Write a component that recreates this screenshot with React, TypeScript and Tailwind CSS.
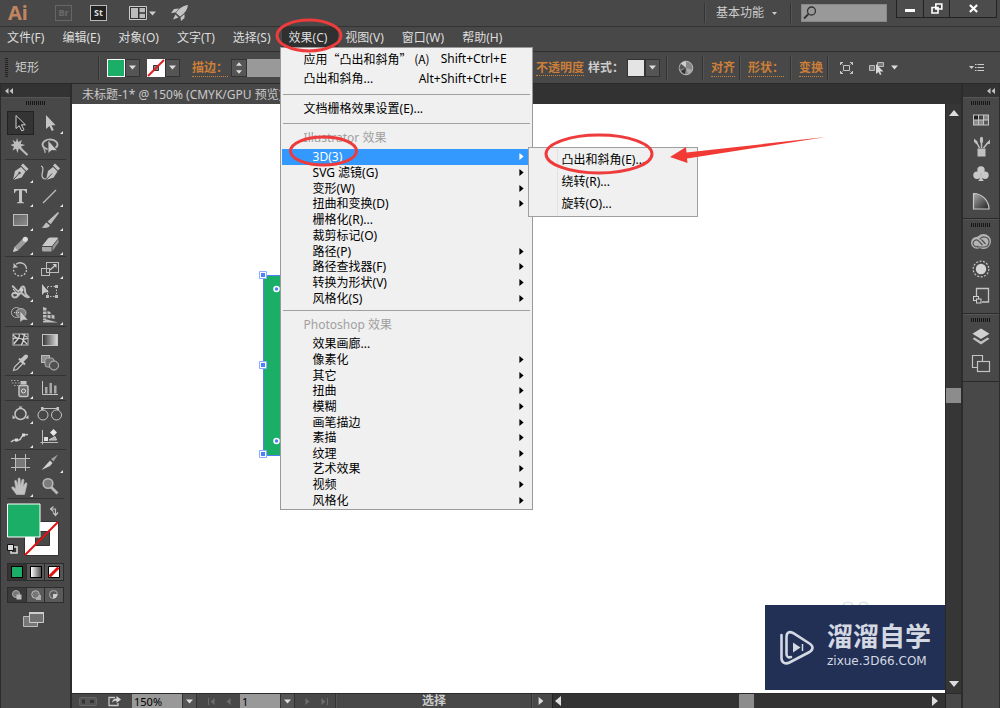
import type { ReactNode } from 'react'
import clsx from 'clsx'

const GREEN = '#1aae66'

/* ---------- data ---------- */

type Effect = { label: string; sub?: boolean; open?: boolean }

const illustratorEffects: Effect[] = [
  { label: '3D(3)', sub: true, open: true },
  { label: 'SVG 滤镜(G)', sub: true },
  { label: '变形(W)', sub: true },
  { label: '扭曲和变换(D)', sub: true },
  { label: '栅格化(R)...' },
  { label: '裁剪标记(O)' },
  { label: '路径(P)', sub: true },
  { label: '路径查找器(F)', sub: true },
  { label: '转换为形状(V)', sub: true },
  { label: '风格化(S)', sub: true },
]

const photoshopEffects: Effect[] = [
  { label: '效果画廊...' },
  { label: '像素化', sub: true },
  { label: '其它', sub: true },
  { label: '扭曲', sub: true },
  { label: '模糊', sub: true },
  { label: '画笔描边', sub: true },
  { label: '素描', sub: true },
  { label: '纹理', sub: true },
  { label: '艺术效果', sub: true },
  { label: '视频', sub: true },
  { label: '风格化', sub: true },
]

const menus = ['文件(F)', '编辑(E)', '对象(O)', '文字(T)', '选择(S)', '效果(C)', '视图(V)', '窗口(W)', '帮助(H)']

/* ---------- tool icons, 24 x 24 grid ---------- */

type Tool = { name: string; icon: ReactNode; more?: boolean; active?: boolean }

const toolGroups: { row: string; tools: Tool[] }[] = [
  {
    row: 'h-6',
    tools: [
      {
        name: '选择工具',
        active: true,
        icon: <path d="M8 4.5v13l3.2-2.8 2.6 5.2 2.2-1.1-2.6-5h4z" fill="#2a2a2a" stroke="#d0d0d0" />,
      },
      {
        name: '直接选择工具',
        more: true,
        icon: <path d="M8 4v14l3.4-3 2.4 5 2-1-2.3-4.8h4.1z" fill="#c4c4c4" />,
      },
      {
        name: '魔棒工具',
        icon: (
          <>
            <path d="M9 3l1.3 4L14 5l-1.4 3.7L17 10l-4 1.6L15 15l-4.2-1.4L9.5 18 8 13.7 4.4 15.5 6 11.8 2.5 10 6.2 8.6 4.5 5 8 7z" fill="#bdbdbd" />
            <path d="M12 13l7.5 7" stroke="#bdbdbd" strokeWidth="2" />
          </>
        ),
      },
      {
        name: '套索工具',
        icon: (
          <>
            <ellipse cx="12" cy="9.5" rx="7.5" ry="5" fill="none" stroke="#b8b8b8" strokeWidth="2" />
            <path d="M6 13c-1 2 2 2 1 5" fill="none" stroke="#b8b8b8" strokeWidth="1.2" />
            <path d="M10 5v13.5l3.5-3 6 .2z" fill="#c8c8c8" stroke="#484848" strokeWidth=".8" />
          </>
        ),
      },
    ],
  },
  {
    row: 'h-6',
    tools: [
      {
        name: '钢笔工具',
        more: true,
        icon: (
          <>
            <path d="M5 20l2-9 6-4 4.5 4.5-3.8 6z" fill="#c4c4c4" />
            <path d="M14 4.5l5.5 5.5" stroke="#c4c4c4" strokeWidth="3" />
            <path d="M5 20l6-6.5" stroke="#484848" />
            <circle cx="11.5" cy="13" r="1.2" fill="#484848" />
          </>
        ),
      },
      {
        name: '曲率工具',
        icon: (
          <>
            <path d="M8 20l2-9 5-4 4.5 4.5-3.8 6z" fill="#c4c4c4" />
            <path d="M16 4.5l5 5" stroke="#c4c4c4" strokeWidth="3" />
            <path d="M8 20l6-6.5" stroke="#484848" />
            <path d="M3 6c4 1 1 6 1 9s1 4 4 4" fill="none" stroke="#c4c4c4" strokeWidth="1.2" />
          </>
        ),
      },
      {
        name: '文字工具',
        more: true,
        icon: <path d="M6 5h13v4h-1c-.3-2-1-2.8-4-2.8V17c0 1.200.6 1.300 2 1.400v.8H9v-.8c1.500-.1 2-.2 2-1.400V6.200c-3 0-3.700.8-4 2.800H6z" fill="#c4c4c4" />,
      },
      { name: '直线段工具', more: true, icon: <path d="M5 19L18 6" stroke="#bdbdbd" strokeWidth="1.3" /> },
      {
        name: '矩形工具',
        more: true,
        icon: <rect x="5.5" y="6.5" width="14" height="11" fill="url(#toolFade)" stroke="#bdbdbd" />,
      },
      {
        name: '画笔工具',
        more: true,
        icon: (
          <>
            <path d="M3 19c3 .5 3-3 5.500-4.500l3.500 3C10 20.500 6 20.500 3 19z" fill="#bdbdbd" />
            <path d="M9.500 13.500L20 4l1 1L12.700 16.300z" fill="#bdbdbd" />
          </>
        ),
      },
      {
        name: '铅笔工具',
        more: true,
        icon: (
          <>
            <path d="M5 20l1.500-5L15 6.500l3.500 3.500L10 18.500z" fill="#9c9c9c" />
            <path d="M5 20l1.500-5 3.500 3.500z" fill="#c8c8c8" />
            <circle cx="17.3" cy="7.3" r="2.6" fill="#dcdcdc" />
          </>
        ),
      },
      {
        name: '橡皮擦工具',
        more: true,
        icon: (
          <>
            <path d="M4 14l6-7.500q1-1 2.500-1H19q1.500 0 .8 1.200L14 14z" fill="#cacaca" />
            <path d="M4 15h9.500v4.500H5.500q-1.500 0-1.500-1.500z" fill="#a8a8a8" />
            <path d="M14.500 14.800L20.500 7v3.500l-6 8.500z" fill="#969696" />
          </>
        ),
      },
    ],
  },
  {
    row: 'h-[23px]',
    tools: [
      {
        name: '旋转工具',
        more: true,
        icon: (
          <>
            <path d="M8 7.200A6.500 6.500 0 0 1 18.500 12" fill="none" stroke="#c4c4c4" strokeWidth="1.3" />
            <path d="M18.500 13A6.500 6.500 0 1 1 6 10" fill="none" stroke="#c4c4c4" strokeWidth="1.3" strokeDasharray="2 1.5" />
            <path d="M5.500 6v4.500H10z" fill="#c4c4c4" />
          </>
        ),
      },
      {
        name: '比例缩放工具',
        more: true,
        icon: (
          <>
            <rect x="8.5" y="5.5" width="12" height="10" fill="none" stroke="#bdbdbd" />
            <rect x="3.5" y="11.5" width="8" height="7" fill="none" stroke="#bdbdbd" />
            <path d="M12 13l5-4.500" stroke="#d0d0d0" strokeWidth="1.2" />
            <path d="M14.500 7H18.500v4z" fill="#d0d0d0" />
          </>
        ),
      },
      {
        name: '宽度工具',
        more: true,
        icon: (
          <>
            <path d="M4 6c3 1 3 4 6 5s2-5 5-4.500c3 .5 1 5 3 8l2.500 2.500c-4 1-5-3-7-4s-3 4.500-6.500 4.500-3.500-4.500-1-4.500 3.500 1 6 0" fill="none" stroke="#bdbdbd" strokeWidth="2" />
            <circle cx="13.5" cy="10" r="2" fill="#cfcfcf" />
            <path d="M5 9l5 6" stroke="#e0e0e0" />
          </>
        ),
      },
      {
        name: '自由变换工具',
        icon: (
          <>
            <rect x="9.5" y="6.5" width="9" height="10" fill="none" stroke="#bdbdbd" strokeDasharray="1.5 1.5" />
            <path d="M17 5h3v3h-3zM17 15h3v3h-3zM8 15h3v3H8z" fill="#bdbdbd" />
            <path d="M4 4v11l2.500-2.500 4.500-.3z" fill="#c8c8c8" />
          </>
        ),
      },
      {
        name: '形状生成器工具',
        more: true,
        icon: (
          <>
            <ellipse cx="8.5" cy="9.5" rx="5" ry="5" fill="none" stroke="#b0b0b0" />
            <ellipse cx="13" cy="10" rx="5" ry="4.5" fill="#808080" stroke="#b0b0b0" />
            <path d="M6 9.500h6" stroke="#d0d0d0" strokeDasharray="1 1" />
            <path d="M12 7.500v11.800l3-2.400 5 .2z" fill="#c8c8c8" stroke="#484848" strokeWidth=".5" />
          </>
        ),
      },
      {
        name: '透视网格工具',
        more: true,
        icon: (
          <>
            <path d="M5 4l3.500 1v12H5zM9.500 8l3 1v6.500l-3-.5zM13.500 11.500l3 1v3.500l-3-.7zM5 18v1.500h15L9 16.500z" fill="#bdbdbd" />
            <path d="M5 8h4M5 11.500h8M5 15h4" stroke="#484848" />
          </>
        ),
      },
    ],
  },
  {
    row: 'h-6',
    tools: [
      {
        name: '网格工具',
        icon: (
          <>
            <rect x="5" y="7" width="15" height="11" fill="#3a3a3a" stroke="#bdbdbd" />
            <path d="M5 12c5-4 9 3 15-1M6 17c2-5 7-5 5-10M13 18c4-4 1-7 4-11M5 8l5 4-4 5M14 12l5 5M14 7l5 3" fill="none" stroke="#d4d4d4" strokeWidth="1.2" />
          </>
        ),
      },
      { name: '渐变工具', icon: <rect x="4.5" y="7.5" width="15" height="11" fill="url(#modeFade)" stroke="#c4c4c4" /> },
      {
        name: '吸管工具',
        more: true,
        icon: (
          <>
            <path d="M5.500 19.500l1-3.500 6-6 2.500 2.500-6 6z" fill="none" stroke="#c4c4c4" strokeWidth="1.2" />
            <path d="M11 7.500l6 6" stroke="#c4c4c4" strokeWidth="2" />
            <path d="M14 9.500l4-4" stroke="#c4c4c4" strokeWidth="4" strokeLinecap="round" />
          </>
        ),
      },
      {
        name: '混合工具',
        icon: (
          <>
            <rect x="3.5" y="4.5" width="8" height="7" fill="#909090" stroke="#bdbdbd" />
            <rect x="7" y="7" width="9" height="9" rx="2.5" fill="#6c6c6c" stroke="#b0b0b0" />
            <circle cx="16" cy="14.5" r="4.5" fill="#505050" stroke="#c4c4c4" />
          </>
        ),
      },
    ],
  },
  {
    row: 'h-6',
    tools: [
      {
        name: '符号喷枪工具',
        more: true,
        icon: (
          <>
            <rect x="11" y="9.5" width="9" height="11" rx="1.5" fill="#6a6a6a" stroke="#c4c4c4" strokeWidth="1.5" />
            <path d="M12.500 5h6v3.500h-6z" fill="#c4c4c4" />
            <circle cx="15.500" cy="15" r="2" fill="none" stroke="#e0e0e0" />
            <path d="M3 4.500h9M4 7h8M6 9.500h5" stroke="#a8a8a8" strokeDasharray="1.5 1.5" />
          </>
        ),
      },
      {
        name: '柱形图工具',
        more: true,
        icon: (
          <>
            <path d="M4.500 5v13.500H20" fill="none" stroke="#c4c4c4" />
            <path d="M7 11h2.500v6.500H7zM11.500 7H14v10.500h-2.500zM16 9.500h2.500v8H16z" fill="#a8a8a8" />
          </>
        ),
      },
    ],
  },
  {
    row: 'h-6',
    tools: [
      {
        name: '椭圆工具',
        more: true,
        icon: (
          <>
            <circle cx="12.500" cy="13" r="5.5" fill="none" stroke="#c4c4c4" strokeWidth="1.5" />
            <path d="M10.500 5.500h4L12.500 8zM4.500 14l3.500 3-3.500 1zM20.500 14L17 17l3.500 1z" fill="#c4c4c4" />
          </>
        ),
      },
      {
        name: '连接工具',
        icon: (
          <>
            <circle cx="5" cy="14" r="5" fill="none" stroke="#c4c4c4" />
            <circle cx="18.500" cy="14" r="5" fill="none" stroke="#c4c4c4" />
            <path d="M3 7.500h18" stroke="#c4c4c4" />
            <path d="M3 6h2.500v3H3zM18.500 6H21v3h-2.500z" fill="#c4c4c4" />
          </>
        ),
      },
      {
        name: '平滑工具',
        more: true,
        icon: (
          <>
            <path d="M3 17c2-2 3-2.500 5-2s4 1 5-2 3-3.500 7-3.500" fill="none" stroke="#c4c4c4" strokeWidth="1.5" />
            <path d="M7 13.500h3v3H7zM14 8.500h3v3h-3z" fill="#d8d8d8" />
          </>
        ),
      },
      {
        name: '度量工具',
        icon: (
          <>
            <path d="M4.500 5v14.500M2.500 17.500H20" stroke="#bdbdbd" />
            <path d="M6 12h4v4H6z" fill="#e0e0e0" />
            <path d="M11 15l6-3.500 1.500 3.500z" fill="#a8a8a8" stroke="#d0d0d0" />
            <path d="M15.500 4l3.500 3.500-3.500 3.500L12 7.500z" fill="#e8e8e8" />
          </>
        ),
      },
    ],
  },
  {
    row: 'h-6',
    tools: [
      {
        name: '画板工具',
        icon: (
          <>
            <rect x="7.5" y="8.5" width="10" height="9" fill="#787878" />
            <path d="M7.500 4v17M17.500 4v17M3 8.500h19M3 17.500h19" stroke="#bdbdbd" />
          </>
        ),
      },
      {
        name: '切片工具',
        more: true,
        icon: (
          <>
            <path d="M3.500 20L12 10.500l2.500 2.500L12 16z" fill="#d0d0d0" />
            <path d="M13 9l7-4.500-4.500 7z" fill="#a0a0a0" />
          </>
        ),
      },
      {
        name: '抓手工具',
        more: true,
        icon: (
          <path
            d="M8.500 20.500L4 14.500c-.9-1.300.6-2.200 1.700-1.200L8 15 6.700 7.500c-.2-1.300 1.500-1.700 1.900-.3L10 12l.1-7c0-1.400 1.900-1.400 2 0l.4 7 1.500-6c.4-1.300 2.100-.9 1.900.4L15 12.800l2.200-3.500c.8-1.100 2.200-.2 1.700 1L16.500 20.500z"
            fill="#c0c0c0"
            stroke="#c0c0c0"
            strokeWidth=".6"
          />
        ),
      },
      {
        name: '缩放工具',
        icon: (
          <>
            <path d="M13 13l6.500 6.500" stroke="#b8b8b8" strokeWidth="2.8" />
            <circle cx="10" cy="9.500" r="4.8" fill="#7c7c7c" stroke="#b8b8b8" strokeWidth="1.6" />
          </>
        ),
      },
    ],
  },
]

/* ---------- panel icons on the right ---------- */

const dockGroups: { name: string; icon: ReactNode }[][] = [
  [
    {
      name: '色板',
      icon: (
        <>
          <path d="M4 6.500h16v11H4z" fill="#c4c4c4" />
          <path d="M5 7.500h4v4H5z" fill="#222" />
          <path d="M10 7.500h4v4h-4z" fill="#444" />
          <path d="M15 7.500h4v4h-4z" fill="#888" />
          <path d="M5 12.500h4v4H5zM10 12.500h4v4h-4z" fill="#8a8a8a" />
          <path d="M15 12.500h4v4h-4z" fill="#5a5a5a" />
        </>
      ),
    },
    {
      name: '画笔',
      icon: (
        <>
          <path d="M8.500 13.500h8v8h-8z" fill="#c0c0c0" />
          <path d="M10.500 13L7 6M12.500 13V5M14.500 13l5-6" stroke="#c0c0c0" strokeWidth="1.5" />
          <ellipse cx="12.500" cy="5" rx="1.6" ry="3.2" fill="#c0c0c0" />
          <path d="M5 3.500l3.500 3-.5 3-3-2.500zM16.500 9.500l4.500-5v4.200z" fill="#c0c0c0" />
        </>
      ),
    },
    {
      name: '符号',
      icon: (
        <>
          <circle cx="12" cy="8" r="3.7" fill="#c8c8c8" />
          <circle cx="8" cy="13.200" r="3.7" fill="#c8c8c8" />
          <circle cx="16" cy="13.200" r="3.7" fill="#c8c8c8" />
          <path d="M11.300 11h1.400c0 5 .5 6.500 2.300 8H9c1.800-1.500 2.300-3 2.300-8z" fill="#c8c8c8" />
        </>
      ),
    },
    {
      name: '颜色参考',
      icon: <path d="M4.500 20V4.500C13 4.500 20 11.500 20 20z" fill="url(#guideFade)" stroke="#c8c8c8" strokeWidth="1.2" />,
    },
  ],
  [
    {
      name: 'Libraries',
      icon: (
        <>
          <circle cx="8" cy="12.800" r="6" fill="#b4b4b4" />
          <circle cx="14.500" cy="11.500" r="7.500" fill="#b4b4b4" />
          <path d="M8 17h7a5 5 0 1 0-4.300-7.500" fill="none" stroke="#505050" strokeWidth="1.2" />
          <path d="M13.500 15L10 11.300C7.500 8.500 4 10.500 4 13.200s3 4.600 5.300 2.800" fill="none" stroke="#505050" strokeWidth="1.2" />
          <path d="M12.500 9.500l4 4.500" stroke="#505050" strokeWidth="1.2" />
        </>
      ),
    },
    {
      name: '外观',
      icon: (
        <>
          <circle cx="12" cy="12" r="5.2" fill="#d4d4d4" />
          <circle cx="12" cy="12" r="7.8" fill="none" stroke="#c4c4c4" strokeWidth="1.2" strokeDasharray="2 1.5" />
        </>
      ),
    },
    {
      name: '图形样式',
      icon: (
        <>
          <path d="M7.500 12V4.500h12V18H13" fill="none" stroke="#c4c4c4" strokeWidth="1.3" />
          <rect x="4.5" y="12.5" width="5" height="4" fill="#484848" stroke="#d0d0d0" />
          <rect x="7.5" y="15" width="4.5" height="4" fill="#484848" stroke="#d0d0d0" />
        </>
      ),
    },
  ],
  [
    {
      name: '图层',
      icon: (
        <>
          <path d="M12 3.500l8.500 5.200L12 14 3.500 8.700z" fill="#d0d0d0" />
          <path d="M5.500 12.500l6.500 4 6.500-4 2 1.300L12 19.500l-8.500-5.700z" fill="#c0c0c0" />
        </>
      ),
    },
    {
      name: '画板',
      icon: (
        <>
          <path d="M8 15.500H3.500v-12h10V9" fill="none" stroke="#c4c4c4" strokeWidth="1.2" />
          <rect x="8.5" y="9.5" width="12" height="10" fill="#484848" stroke="#c4c4c4" strokeWidth="1.2" />
        </>
      ),
    },
  ],
]

/* ---------- small parts ---------- */

function Icon({ children }: { children: ReactNode }) {
  return (
    <svg viewBox="0 0 24 24" className="size-6 shrink-0 overflow-visible" aria-hidden="true">
      {children}
    </svg>
  )
}

function Gradients() {
  return (
    <svg className="absolute size-0" aria-hidden="true">
      <defs>
        <linearGradient id="toolFade" x1="0" y1="0" x2="1" y2="1">
          <stop offset="0" stopColor="#666" />
          <stop offset="1" stopColor="#8c8c8c" />
        </linearGradient>
        <linearGradient id="modeFade">
          <stop offset="0" stopColor="#333" />
          <stop offset="1" stopColor="#ddd" />
        </linearGradient>
        <linearGradient id="guideFade" x1="0" y1="0" x2="1" y2="1">
          <stop offset="0" stopColor="#aaa" />
          <stop offset="1" stopColor="#222" />
        </linearGradient>
      </defs>
    </svg>
  )
}

function Caret({ dir = 'down', className }: { dir?: 'down' | 'up' | 'left' | 'right'; className?: string }) {
  const d = { down: 'M0 2h10L5 8z', up: 'M0 8h10L5 2z', left: 'M8 0v10L2 5z', right: 'M2 0v10l6-5z' }[dir]
  return (
    <svg viewBox="0 0 10 10" className={clsx('shrink-0', className)} aria-hidden="true">
      <path d={d} fill="currentColor" />
    </svg>
  )
}

function Divider({ className }: { className?: string }) {
  return <span className={clsx('w-0.5 shrink-0 border-l border-[#333] bg-[#555]', className)} />
}

function Grip() {
  return (
    <svg viewBox="0 0 20 4" className="mx-auto h-1 w-5 shrink-0" aria-hidden="true">
      <path d="M.5 0v4M2.500 0v4M4.500 0v4M6.500 0v4M8.500 0v4M10.500 0v4M12.500 0v4M14.500 0v4M16.500 0v4M18.500 0v4" stroke="#161616" />
    </svg>
  )
}

function Chevrons() {
  return (
    <svg viewBox="0 0 8 6" className="h-1.5 w-2" aria-hidden="true">
      <path d="M3.500 0v6L0 3zM8 0v6L4.500 3z" fill="#c4c4c4" />
    </svg>
  )
}

function DropButton({ label }: { label: string }) {
  return (
    <button aria-label={label} className="flex h-[18px] w-[15px] shrink-0 items-center justify-center border border-[#333] bg-[#555] text-[#ddd]">
      <Caret className="size-[7px]" />
    </button>
  )
}

function ControlLink({ children }: { children: ReactNode }) {
  return (
    <a href="#" className="shrink-0 border-b border-dotted border-[#c8803a] leading-[15px] font-bold text-[#cc7f38]">
      {children}
    </a>
  )
}

/* ---------- effect menu ---------- */

function Submenu() {
  return (
    <ul className="absolute -top-0.5 left-full z-20 -ml-[3px] flex h-[70px] w-[170px] flex-col border border-[#a0a0a0] bg-[#f0f0f0] py-px text-black">
      {['凸出和斜角(E)...', '绕转(R)...', '旋转(O)...'].map(label => (
        <li key={label} className="flex flex-1">
          <button className="ml-7 flex-1 border-l border-[#e2e2e2] pl-1 text-left">{label}</button>
        </li>
      ))}
    </ul>
  )
}

function EffectRow({ label, sub, open }: Effect) {
  return (
    <li className="relative flex min-h-0 flex-1">
      <button
        className={clsx('flex flex-1 items-center justify-between pr-1.5 pl-[31px] leading-[15px]', open && 'bg-[#3399ff] text-white')}
      >
        {label}
        {sub && <Caret dir="right" className="size-[7px]" />}
      </button>
      {open && <Submenu />}
    </li>
  )
}

function MenuLine() {
  return <div className="flex h-2 items-center px-px"><div className="h-px flex-1 bg-[#a0a0a0]" /></div>
}

function EffectMenu() {
  return (
    <div className="absolute top-full -left-0.5 z-10 w-[253px] border border-[#999] bg-[#f0f0f0] px-px py-px whitespace-nowrap text-black">
      <button className="flex h-5 w-full items-center justify-between pr-6 pl-[22px]">
        {/* CJK face first so the quotes come out full width */}
        <span className="font-['Noto_Sans_CJK_SC',sans-serif]">应用“凸出和斜角” (A)</span>
        <span>Shift+Ctrl+E</span>
      </button>
      <button className="mb-px flex h-5 w-full items-center justify-between pr-6 pl-[22px]">
        <span>凸出和斜角...</span>
        <span>Alt+Shift+Ctrl+E</span>
      </button>
      <MenuLine />
      <button className="mt-px flex h-5 w-full items-center pl-[22px]">文档栅格效果设置(E)...</button>
      <MenuLine />
      <div className="h-[22px] pl-[22px] leading-[22px] text-[#a0a0a0]">Illustrator 效果</div>
      <ul className="flex h-[157px] flex-col">
        {illustratorEffects.map(e => <EffectRow key={e.label} {...e} />)}
      </ul>
      <MenuLine />
      <div className="h-[22px] pl-[22px] leading-[22px] text-[#a0a0a0]">Photoshop 效果</div>
      <ul className="flex h-[172px] flex-col">
        {photoshopEffects.map(e => <EffectRow key={e.label} {...e} />)}
      </ul>
    </div>
  )
}

/* ---------- bars ---------- */

function TitleBar() {
  return (
    <header className="flex h-[27px] shrink-0 items-center border-b border-[#333]">
      <span className="w-[55px] pl-2 text-[20px] leading-6 font-bold text-[#c18462]">Ai</span>
      <button className="h-4 w-[17px] border border-[#666] text-[9px] leading-3 font-bold text-[#6c6c6c]">Br</button>
      <button className="ml-[18px] h-4 w-[17px] border border-[#bbb] bg-[#222] text-[9px] leading-3 font-bold text-[#ddd]">St</button>
      <button aria-label="排列文档" className="ml-[22px] flex items-center text-[#ccc]">
        <svg viewBox="0 0 18 14" className="h-3.5 w-[18px]" aria-hidden="true">
          <path d="M.5.5h17v13H.5z" fill="#333" stroke="#ccc" />
          <path d="M2 2h7v10H2zM10.500 2H16v4.300h-5.500zM10.500 7.700H16V12h-5.500z" fill="#bbb" />
        </svg>
        <Caret className="ml-0.5 size-[7px]" />
      </button>
      <button aria-label="GPU 性能" className="ml-[15px]">
        <svg viewBox="0 0 18 18" className="size-[18px]" aria-hidden="true">
          <path d="M17 1C10 2 7 6 5 9l4 3.500C13 10 16 7 17 1zM4.500 8.500L8 4.500 3 5 0 9zM9.500 13.500l4-3.500v4l-3.500 3zM4.500 10.500l-2.500 5 5.500-2z" fill="#c4c4c4" />
        </svg>
      </button>

      <div className="mr-[3px] ml-auto flex h-full items-center">
        <Divider className="h-5" />
        <button className="ml-[10px] flex items-center text-[#ccc]">
          基本功能
          <Caret className="ml-2 size-[5px]" />
        </button>
        <Divider className="ml-[13px] h-5" />
        <label className="ml-[9px] flex h-[18px] w-[86px] items-center border border-[#888] bg-[#999]">
          <svg viewBox="0 0 14 14" className="ml-px size-3.5 shrink-0" aria-hidden="true">
            <circle cx="8.5" cy="5" r="4" fill="none" stroke="#333" strokeWidth="1.3" />
            <path d="M5.500 8L1 12.500" stroke="#333" strokeWidth="1.8" />
          </svg>
          <input type="search" aria-label="搜索帮助" className="w-full min-w-0 bg-transparent outline-none" />
        </label>
        <div className="ml-[9px] flex h-[18px] self-start border border-t-0 border-[#222] bg-[#4c4c4c]">
          <button aria-label="最小化" className="flex w-[27px] items-center justify-center border-r border-[#222] pt-1">
            <span className="h-[3px] w-2.5 bg-white" />
          </button>
          <button aria-label="还原" className="flex w-[26px] items-center justify-center border-r border-[#222]">
            <svg viewBox="0 0 12 11" className="h-[11px] w-3" aria-hidden="true">
              <path d="M4.800 1h6v5h-6zM1 4.500h6V10H1z" fill="#4c4c4c" stroke="#fff" strokeWidth="1.6" />
            </svg>
          </button>
          <button aria-label="关闭" className="flex w-[46px] items-center justify-center">
            <svg viewBox="0 0 10 10" className="size-[9px]" aria-hidden="true">
              <path d="M1 1l8 8M9 1L1 9" stroke="#fff" strokeWidth="2.4" />
            </svg>
          </button>
        </div>
      </div>
    </header>
  )
}

function MenuBar() {
  return (
    <nav className="flex h-[25px] shrink-0 border-b border-[#2e2e2e] text-[#ddd]">
      {menus.map(m => (
        <div key={m} className="relative h-5">
          <button className={clsx('h-full pr-[11px] pl-[7px] leading-[21px]', m === '效果(C)' && 'bg-[#303030]')}>{m}</button>
          {m === '效果(C)' && <EffectMenu />}
        </div>
      ))}
    </nav>
  )
}

function ControlBar() {
  return (
    <div className="flex h-8 shrink-0 items-center border-b border-[#2a2a2a] whitespace-nowrap text-[#ccc]">
      <div className="flex w-[536px] shrink-0 items-center pl-[5px]">
        <svg viewBox="0 0 3 20" className="h-5 w-[3px]" aria-hidden="true">
          <path d="M0 .5h3M0 2.500h3M0 4.500h3M0 6.500h3M0 8.500h3M0 10.500h3M0 12.500h3M0 14.500h3M0 16.500h3M0 18.500h3" stroke="#222" />
        </svg>
        <span className="w-[90px] pl-[7px]">矩形</span>
        <Divider className="mr-[7px] h-6" />
        <button aria-label="填色" className="size-[18px] border border-white bg-[#1aae66]" />
        <DropButton label="填色选项" />
        <button aria-label="描边颜色" className="ml-[7px] size-[18px]">
          <svg viewBox="0 0 18 18" className="size-full" aria-hidden="true">
            <path d="M0 0h18v18H0z" fill="#fff" />
            <path d="M6.500 6.500h5v5h-5z" fill="#888" stroke="#333" />
            <path d="M1 17L17 1" stroke="#e02020" strokeWidth="2" />
          </svg>
        </button>
        <DropButton label="描边颜色选项" />
        <span className="ml-3"><ControlLink>描边：</ControlLink></span>
        <div className="ml-[3px] flex h-[18px] w-4 flex-col items-center justify-around border border-[#333] bg-[#555]">
          <button aria-label="增加" className="text-[#ddd]"><Caret dir="up" className="block size-1.5" /></button>
          <button aria-label="减少" className="text-[#ddd]"><Caret className="block size-1.5" /></button>
        </div>
        <input aria-label="描边粗细" className="h-[18px] w-14 bg-[#999]" />
      </div>
      <ControlLink>不透明度</ControlLink>
      <span className="ml-1 font-bold">样式：</span>
      <button aria-label="样式" className="ml-[3px] size-[18px] border border-[#333] bg-[#e4e4e4]" />
      <DropButton label="样式选项" />
      <Divider className="ml-1.5 h-6" />
      <button aria-label="重新着色图稿" className="ml-[10px]">
        <svg viewBox="0 0 16 16" className="size-4" aria-hidden="true">
          <circle cx="8" cy="8" r="6.8" fill="#888" stroke="#bbb" />
          <path d="M8 8L3 3.500A6.500 6.500 0 0 1 8 1.500z" fill="#ccc" />
          <path d="M8 8l6.300 2A6.500 6.500 0 0 1 10 14z" fill="#aaa" />
          <path d="M8 8L1.700 9.500A6.500 6.500 0 0 1 3 4z" fill="#555" />
          <path d="M8 8l-1 6a6.500 6.500 0 0 1-4-3z" fill="#333" />
        </svg>
      </button>
      <Divider className="ml-2 h-6" />
      <span className="ml-[7px]"><ControlLink>对齐</ControlLink></span>
      <Divider className="ml-1 h-6" />
      <span className="ml-[7px]"><ControlLink>形状：</ControlLink></span>
      <Divider className="ml-1.5 h-6" />
      <span className="ml-[7px]"><ControlLink>变换</ControlLink></span>
      <Divider className="ml-1 h-6" />
      <button aria-label="隔离选中的对象" className="ml-[10px]">
        <svg viewBox="0 0 15 14" className="h-3.5 w-[15px]" aria-hidden="true">
          <path d="M4.500 4.500h6v5h-6z" fill="none" stroke="#c4c4c4" />
          <path d="M1.500 1.500l2 2M13.500 1.500l-2 2M1.500 12.500l2-2M13.500 12.500l-2-2M1.500 4V1.500H4M13.500 4V1.500H11M1.500 10v2.500H4M13.500 10v2.500H11" fill="none" stroke="#c4c4c4" />
        </svg>
      </button>
      <button aria-label="选择类似的对象" className="ml-[15px] flex items-center text-[#ddd]">
        <svg viewBox="0 0 16 14" className="h-3.5 w-4" aria-hidden="true">
          <path d="M.5 4.500h5v5h-5zM8.500 1.500h6v4h-6z" fill="#777" stroke="#bbb" />
          <path d="M7 3v10l2.500-2 1.500 3 1.500-.8L11 10.500h3.500z" fill="#d8d8d8" />
        </svg>
        <Caret className="ml-1.5 size-[7px]" />
      </button>
      <button aria-label="面板菜单" className="mr-4 ml-auto flex items-center gap-px text-[#ccc]">
        <Caret className="size-[5px]" />
        <svg viewBox="0 0 9 9" className="size-[9px]" aria-hidden="true">
          <path d="M0 1.500h1.500M2.500 1.500H9M0 4.500h1.500M2.500 4.500H9M0 7.500h1.500M2.500 7.500H9" stroke="currentColor" />
        </svg>
      </button>
    </div>
  )
}

/* ---------- tool panel ---------- */

function FillStroke() {
  return (
    <svg viewBox="0 0 60 54" className="ml-[6px] h-[54px] w-[60px]" role="img" aria-label="填色和描边">
      <path d="M17.500 18.500h34v34h-34z" fill="#fff" stroke="#333" />
      <path d="M28.500 28.500h14v14h-14z" fill="#484848" stroke="#333" />
      <path d="M18 52L51 19" stroke="#e01010" strokeWidth="2" />
      <path d="M.5 1h32.500v33H.5z" fill={GREEN} stroke="#fff" />
      <path d="M44 6h4.500v5M46.500 3.500L43.500 6l3 2.500M46 9.500l2.500 3 2.500-3" fill="none" stroke="#c0c0c0" strokeWidth="1.2" />
      <path d="M4 44h6v6H4z" fill="#333" stroke="#ddd" strokeWidth="1.5" />
      <path d="M.5 41.500h6v6h-6z" fill="#ddd" stroke="#111" />
    </svg>
  )
}

function ToolPanel() {
  return (
    <aside className="flex w-[72px] shrink-0 flex-col border-r-2 border-l border-[#2c2c2c]">
      <div className="flex h-[13px] shrink-0 items-center bg-[#333] pl-1"><Chevrons /></div>
      <div className="flex h-3.5 shrink-0 items-start border-t border-[#555] pt-[3px]"><Grip /></div>
      {toolGroups.map((group, i) => (
        <div key={i} className={clsx('mx-1 grid grid-cols-[30px_30px]', i > 0 && 'border-t border-[#333]')}>
          {group.tools.map(t => (
            <button
              key={t.name}
              aria-label={t.name}
              className={clsx('relative flex items-center justify-center', group.row)}
            >
              <span className={clsx('flex h-full w-[27px] items-center justify-center', t.active && 'border border-[#222] bg-[#343434]')}>
                <Icon>{t.icon}</Icon>
              </span>
              {t.more && (
                <svg viewBox="0 0 4 4" className="absolute right-0.5 bottom-px size-[3px]" aria-hidden="true">
                  <path d="M4 0v4H0z" fill="#e8e8e8" />
                </svg>
              )}
            </button>
          ))}
        </div>
      ))}
      <div className="mx-1.5 border-t border-[#333]" />
      <div className="mt-1"><FillStroke /></div>
      <div className="mt-1.5 ml-1.5 flex h-[18px] w-[57px] border border-[#2c2c2c] bg-[#555]">
        <button aria-label="颜色" className="flex flex-1 items-center justify-center bg-[#333]">
          <span className="size-3 border border-black bg-[#1aae66]" />
        </button>
        <button aria-label="渐变" className="flex flex-1 items-center justify-center border-x border-[#2c2c2c]">
          <span className="size-3 border border-black bg-linear-to-r from-white to-[#555]" />
        </button>
        <button aria-label="无" className="flex flex-1 items-center justify-center">
          <svg viewBox="0 0 12 12" className="size-3" aria-hidden="true">
            <path d="M.5.5h11v11H.5z" fill="#fff" stroke="#000" />
            <path d="M1.500 10.500l9-9" stroke="#e01010" strokeWidth="3" />
          </svg>
        </button>
      </div>
      <div className="mt-1.5 ml-1.5 flex h-4 w-[57px] border border-[#2c2c2c] bg-[#5a5a5a]">
        <button aria-label="正常绘图" className="flex flex-1 items-center justify-center bg-[#3a3a3a]">
          <svg viewBox="0 0 12 12" className="size-3" aria-hidden="true">
            <circle cx="5" cy="5" r="3.5" fill="#777" stroke="#aaa" />
            <path d="M5.500 5.500h5v5h-5z" fill="#bbb" />
          </svg>
        </button>
        <button aria-label="背面绘图" className="flex flex-1 items-center justify-center border-x border-[#2c2c2c]">
          <svg viewBox="0 0 12 12" className="size-3" aria-hidden="true">
            <path d="M6 6h5v5H6z" fill="#aaa" />
            <circle cx="5.5" cy="5.5" r="3.8" fill="#777" stroke="#bbb" />
          </svg>
        </button>
        <button aria-label="内部绘图" className="flex flex-1 items-center justify-center">
          <svg viewBox="0 0 12 12" className="size-3" aria-hidden="true">
            <path d="M9.500 5.500a4 4 0 1 0-4 4" fill="none" stroke="#aaa" />
            <path d="M5 5h4.500A4 4 0 0 1 5 9.500z" fill="#ccc" />
          </svg>
        </button>
      </div>
      <button aria-label="更改屏幕模式" className="mt-2 ml-[22px] w-[22px]">
        <svg viewBox="0 0 22 17" className="h-[17px] w-[22px]" aria-hidden="true">
          <path d="M.5 5.500h14v10H.5z" fill="#777" stroke="#bbb" />
          <path d="M6.500 1.500h14v10h-14z" fill="#707070" stroke="#ccc" />
          <path d="M6 1h15v2H6z" fill="#ccc" />
        </svg>
      </button>
    </aside>
  )
}

/* ---------- document ---------- */

function Artwork() {
  return (
    <svg viewBox="0 0 120 190" className="absolute top-[166px] left-[186px] h-[190px] w-[120px]" role="img" aria-label="矩形">
      <path d="M5.500 5.500h108v180H5.500z" fill={GREEN} stroke="#4f80ff" />
      {[5, 95, 184].map(y => (
        <g key={y}>
          <path d={`M1.500 ${y - 3.5}h7v7h-7z`} fill="#fff" stroke="#8cacff" />
          <path d={`M3 ${y - 2}h4v4H3z`} fill="#4f80ff" />
        </g>
      ))}
      {[19, 171].map(y => (
        <circle key={y} cx="18.5" cy={y} r="2.5" fill="#4f80ff" stroke="#fff" strokeWidth="1.5" />
      ))}
    </svg>
  )
}

function Watermark() {
  return (
    <div className="absolute right-0 bottom-[3px] flex h-[85px] w-[180px] items-center bg-[#223055] pl-[15px] text-[#d3d8e3]">
      <svg viewBox="0 0 34 36" className="h-9 w-[34px]" aria-hidden="true">
        <path d="M1.500 5v23c0 5 4 6.500 8 4.500l20-10.500c4-2.500 4-6 0-8.500L13 3C9 1 6.500 2.500 6.500 7v17c0 3 2 4 4.500 3" fill="none" stroke="currentColor" strokeWidth="2.6" strokeLinecap="round" />
        <path d="M13 12.500l7.500 5-7.500 5z" fill="currentColor" />
        <path d="M22.500 14v7" stroke="currentColor" strokeWidth="1.5" />
      </svg>
      <div className="ml-[13px] flex flex-col pb-3 whitespace-nowrap">
        <span className="font-['Noto_Sans_CJK_SC',sans-serif] text-[26px] leading-[38px] font-bold">溜溜自学</span>
        <span className="font-['DejaVu_Sans',sans-serif] text-[12px] leading-[14px]">zixue.3D66.COM</span>
      </div>
    </div>
  )
}

function StatusBar() {
  return (
    <footer className="flex h-[15px] shrink-0 border-t border-[#2a2a2a] bg-[#484848] leading-[14px] text-[#ccc]">
      <div className="flex h-full w-[480px] shrink-0 items-center overflow-hidden">
        <svg viewBox="0 0 18 9" className="ml-[7px] h-[9px] w-[18px]" aria-hidden="true">
          <rect x=".5" y=".5" width="17" height="8" rx="1" fill="#555" stroke="#666" />
          <path d="M3 2.500h3v4H3zM11 3h4v3h-4z" fill="#333" />
        </svg>
        <svg viewBox="0 0 13 12" className="ml-[11px] h-3 w-[13px]" aria-hidden="true">
          <path d="M7 2.500H1v8h9V8" fill="none" stroke="#c4c4c4" strokeWidth="1.3" />
          <path d="M4 8c0-3 2-4.500 4.500-4.500V1L13 4.500 8.500 8V5.800C6.500 5.800 5 6.200 4 8z" fill="#d4d4d4" />
        </svg>
        <input aria-label="缩放" defaultValue="150%" className="ml-[11px] h-full w-[50px] bg-[#999] pl-0.5 text-[11px] text-black" />
        <DropButton label="缩放级别" />
        <span className="ml-[11px] flex items-center gap-[9px] text-[#6c6c6c]">
          <button aria-label="首页" className="flex items-center"><span className="h-[7px] w-px bg-current" /><Caret dir="left" className="size-[7px]" /></button>
          <button aria-label="上一页"><Caret dir="left" className="block size-[7px]" /></button>
        </span>
        <input aria-label="画板" defaultValue="1" className="ml-2 h-full w-10 bg-[#999] pl-0.5 text-[11px] text-black" />
        <DropButton label="画板选项" />
        <span className="ml-[9px] flex items-center gap-[9px] text-[#6c6c6c]">
          <button aria-label="下一页"><Caret dir="right" className="block size-[7px]" /></button>
          <button aria-label="末页" className="flex items-center"><Caret dir="right" className="size-[7px]" /><span className="h-[7px] w-px bg-current" /></button>
        </span>
        <Divider className="ml-[7px] h-full" />
        <span className="flex-1 text-center text-[12px] font-bold">选择</span>
        <Divider className="h-full" />
        <button aria-label="状态选项" className="mr-[7px] ml-1 text-[#ddd]"><Caret dir="right" className="block size-2" /></button>
      </div>
      <div className="flex h-full flex-1 items-center border-l border-[#222] bg-[#333] pr-[5px] text-[#ddd]">
        <button aria-label="向左滚动"><Caret dir="left" className="block size-2.5" /></button>
        <span className="ml-44 h-full w-[15px] bg-[#8c8c8c]" />
        <button aria-label="向右滚动" className="ml-auto"><Caret dir="right" className="block size-2.5" /></button>
      </div>
      <div className="h-full w-4 border-l border-[#222]" />
    </footer>
  )
}

function DocumentWindow() {
  return (
    <main className="flex min-w-0 flex-1 flex-col">
      <div className="flex h-5 shrink-0 bg-[#323232]">
        <div className="bg-[#484848] pr-6 pl-[10px] leading-[22px] whitespace-nowrap text-[#c8c8c8]">
          未标题-1* @ 150% (CMYK/GPU 预览)
        </div>
      </div>
      <div className="flex min-h-0 flex-1">
        <div className="relative min-w-0 flex-1 overflow-hidden bg-white">
          <Artwork />
          <svg viewBox="0 0 30 8" className="absolute right-[75px] bottom-[87px] h-2 w-[30px]" aria-hidden="true">
            <path d="M3 7a6 6 0 0 1 10 0M19 7a5 5 0 0 1 9 0" fill="none" stroke="#dbe7e5" strokeWidth="1.5" />
          </svg>
          <Watermark />
        </div>
        <div className="flex w-4 flex-col items-center border-l border-[#282828] bg-[#363636] py-1 text-[#ddd]">
          <button aria-label="向上滚动"><Caret dir="up" className="block size-2.5" /></button>
          <span className="mt-[270px] h-[15px] w-full bg-[#8c8c8c]" />
          <button aria-label="向下滚动" className="mt-auto"><Caret className="block size-2.5" /></button>
        </div>
      </div>
      <StatusBar />
    </main>
  )
}

function Dock() {
  return (
    <aside className="flex w-[39px] shrink-0 flex-col border-r border-l-2 border-[#2c2c2c]">
      <div className="flex h-[13px] shrink-0 items-center justify-end bg-[#333] pr-1"><Chevrons /></div>
      {dockGroups.map((group, i) => (
        <div key={i} className="border-b border-[#2a2a2a] pb-1">
          <div className="mb-px border-t border-[#555] pt-[3px]"><Grip /></div>
          {group.map(p => (
            <button key={p.name} aria-label={p.name} className="mx-auto flex h-[27px] items-center">
              <Icon>{p.icon}</Icon>
            </button>
          ))}
        </div>
      ))}
    </aside>
  )
}

/* red pen marks laid over the whole window */
function Markup() {
  return (
    <svg viewBox="0 0 840 180" className="pointer-events-none absolute top-0 left-0 z-30 h-[180px] w-[840px]" aria-hidden="true">
      <g fill="none" stroke="#ee3b3b" strokeWidth="3">
        <ellipse cx="309" cy="35.5" rx="32" ry="15.5" />
        <ellipse cx="323.5" cy="151" rx="33" ry="14" />
        <ellipse cx="599" cy="154" rx="53" ry="19" />
      </g>
      <path d="M670 157l16-10 .5 5.500L826 137 687 158.500l.5 4.500z" fill="#f23a35" />
    </svg>
  )
}

export default function App() {
  return (
    <div className="relative flex h-screen w-full flex-col overflow-hidden bg-[#484848] font-['Noto_Sans','Noto_Sans_CJK_SC',sans-serif] text-[12px] leading-4">
      <Gradients />
      <TitleBar />
      <MenuBar />
      <ControlBar />
      <div className="flex min-h-0 flex-1">
        <ToolPanel />
        <DocumentWindow />
        <Dock />
      </div>
      <Markup />
    </div>
  )
}
